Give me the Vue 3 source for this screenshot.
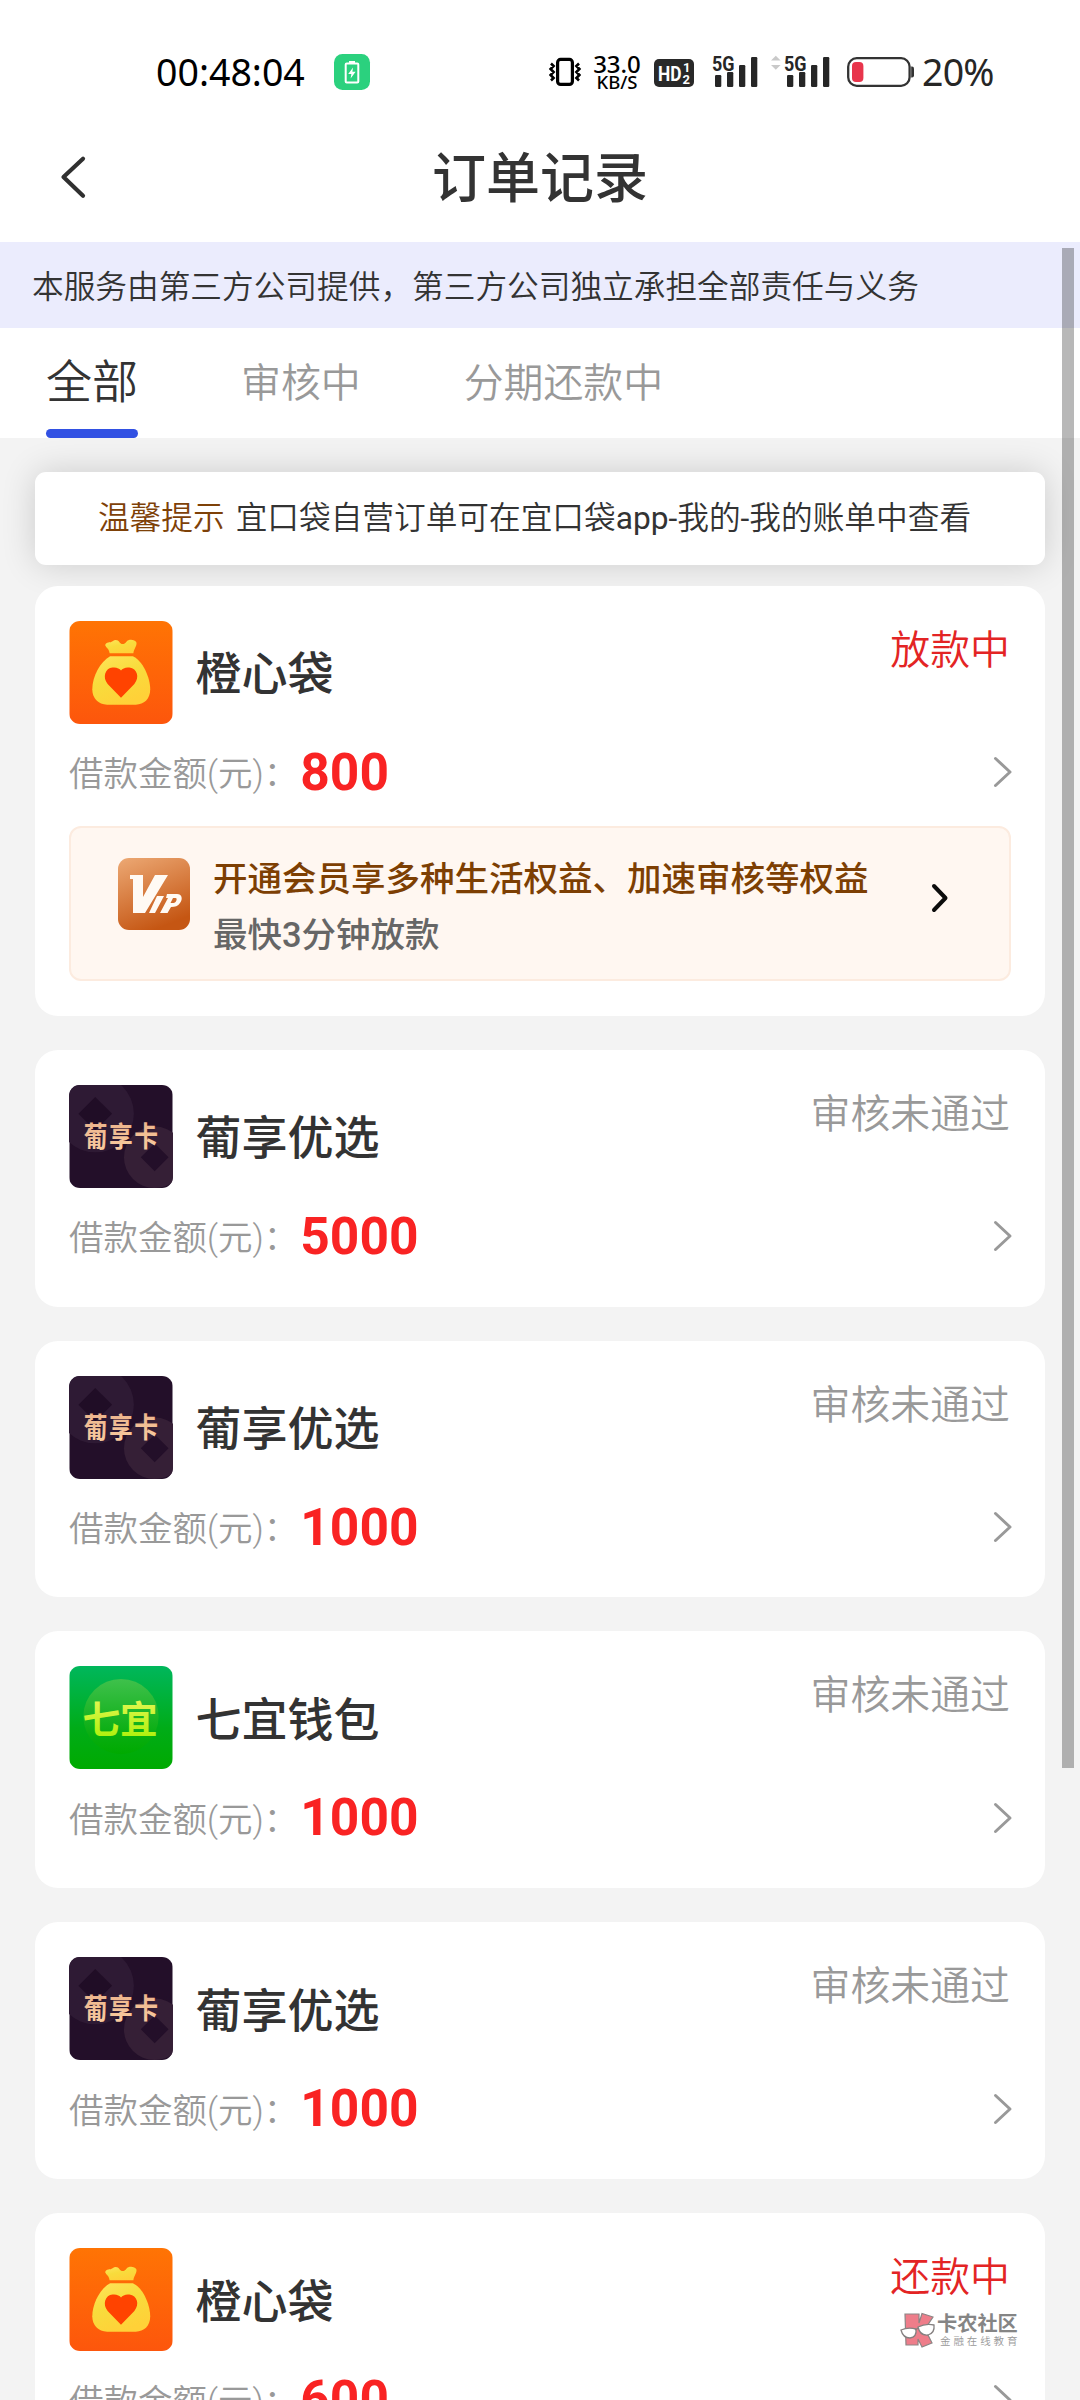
<script setup>
const tabs = ['全部', '审核中', '分期还款中']
const signalBars = [[3, 20, 12], [15, 17, 15], [27, 10, 22], [39, 2, 30]]
const orders = [
  { name: '橙心袋', logo: 'orange', amount: 800, status: '放款中', active: true, vip: true },
  { name: '葡享优选', logo: 'grape', amount: 5000, status: '审核未通过' },
  { name: '葡享优选', logo: 'grape', amount: 1000, status: '审核未通过' },
  { name: '七宜钱包', logo: 'green', amount: 1000, status: '审核未通过' },
  { name: '葡享优选', logo: 'grape', amount: 1000, status: '审核未通过' },
  { name: '橙心袋', logo: 'orange', amount: 600, status: '还款中', active: true },
]
</script>

<template>
  <div class="page">
    <header class="statusbar">
      <span class="clock">00:48:04</span>
      <svg class="charge" width="36" height="36" viewBox="0 0 36 36">
        <rect width="36" height="36" rx="8.5" fill="#2bd17e" />
        <rect x="11.7" y="9.5" width="12.6" height="19" rx="1" fill="none" stroke="#fff" stroke-width="2" />
        <rect x="15" y="7" width="6" height="3" fill="#fff" />
        <path d="M19 13.5 14.2 20H17.4L16.6 24.6 21.6 17.8H18.4Z" fill="#fff" />
      </svg>
      <svg class="vibrate" width="32" height="30" viewBox="0 0 32 30" fill="none" stroke="#000">
        <rect x="8.6" y="2.4" width="14.8" height="25" rx="3" stroke-width="3.2" />
        <path d="M2 6.5 4.6 9 1.6 12 4.6 15 1.6 18 4.6 21 2 23.5M30 6.5 27.4 9 30.4 12 27.4 15 30.4 18 27.4 21 30 23.5" stroke-width="2.6" />
      </svg>
      <div class="speed"><span class="rate">33.0</span><span class="unit">KB/S</span></div>
      <svg class="hd" width="40" height="28" viewBox="0 0 40 28">
        <rect width="40" height="28" rx="5" fill="#292929" />
        <g fill="#fff" font-family="Roboto, sans-serif" font-weight="700">
          <text x="4" y="21.5" font-size="21" textLength="23.5" lengthAdjust="spacingAndGlyphs">HD</text>
          <text x="29" y="13" font-size="13">1</text>
          <text x="28.5" y="24.5" font-size="13">2</text>
        </g>
      </svg>
      <svg v-for="n in 2" :key="n" :class="'signal signal' + n" width="60" height="34" viewBox="-13 0 60 34">
        <path v-if="n === 2" d="M-13 5.5 -8.2 .8 -3.4 5.5ZM-13 10 -8.2 14.7 -3.4 10Z" fill="#c9c9c9" />
        <text x="0" y="15.5" font-family="Roboto, sans-serif" font-weight="700" font-size="21" textLength="22.5" lengthAdjust="spacingAndGlyphs" fill="#262626">5G</text>
        <rect v-for="b in signalBars" :key="b[0]" :x="b[0]" :y="b[1]" width="6.3" :height="b[2]" rx="1.2" fill="#262626" />
      </svg>
      <svg class="battery" width="68" height="30" viewBox="0 0 68 30">
        <rect x="1.2" y="1.2" width="61.4" height="27.6" rx="8.5" fill="none" stroke="#333" stroke-width="2.3" />
        <rect x="5" y="5" width="11.4" height="20" rx="4" fill="#e8354c" />
        <path d="M64.2 9.5H65Q67 9.5 67 11.5V18.5Q67 20.5 65 20.5H64.2Z" fill="#333" />
      </svg>
      <span class="percent">20%</span>
    </header>

    <nav class="titlebar">
      <svg class="back" width="28" height="46" viewBox="0 0 28 46">
        <path d="M24 4.8 4.5 23 24 41.8" fill="none" stroke="#303030" stroke-width="4.2" stroke-linecap="round" stroke-linejoin="round" />
      </svg>
      <h1>订单记录</h1>
    </nav>

    <p class="notice">本服务由第三方公司提供，第三方公司独立承担全部责任与义务</p>

    <div class="tabs">
      <span v-for="(t, i) in tabs" :key="t" class="tab" :class="{ on: i === 0 }">{{ t }}</span>
    </div>

    <main class="list">
      <div class="tip"><span class="tip-label">温馨提示</span><span>宜口袋自营订单可在宜口袋<span class="latin">app-</span>我的<span class="latin">-</span>我的账单中查看</span></div>

      <section v-for="(o, i) in orders" :key="i" class="card">
        <div class="head">
          <svg v-if="o.logo === 'orange'" class="logo" viewBox="0 0 104 104">
            <defs>
              <linearGradient id="orangeBg" x1="0" y1="0" x2="0" y2="1"><stop stop-color="#ff7404" /><stop offset="1" stop-color="#fd560c" /></linearGradient>
              <linearGradient id="bag" x1="0" y1="0" x2=".5" y2="1"><stop stop-color="#ffe45c" /><stop offset=".5" stop-color="#f8dc3c" /><stop offset="1" stop-color="#ffd138" /></linearGradient>
            </defs>
            <rect width="104" height="104" fill="url(#orangeBg)" />
            <path d="M40.500 32.500C40 28 37 27 36 24.500C37 20.500 41 22.500 43.500 20.500C46 18.500 49 19 50.500 21.500C52 24 55.500 24 57.500 21C59.500 18 66 18.500 67.500 21.500C68.500 25 65 28 64.500 32.500Z" fill="url(#bag)" />
            <path d="M41 35.500H64C74 40 81.500 57 81.500 69C81.500 79 75 84.500 67 84.500H38C29 84.500 23 78 23 69C23 56 31 41 41 35.500Z" fill="url(#bag)" />
            <path d="M52 77.500 38.500 63.500C33 57 36 47.500 43.500 47C47.500 46.500 50.500 48 52 50C53.500 48 56.500 46.500 60.500 47C68.500 48 71 57 65.500 63.500Z" fill="#ff4300" />
          </svg>
          <svg v-else-if="o.logo === 'grape'" class="logo" viewBox="0 0 104 104">
            <defs><linearGradient id="gold" x1="0" y1="0" x2="0" y2="1"><stop stop-color="#e9ae88" /><stop offset="1" stop-color="#fbd0a2" /></linearGradient></defs>
            <rect width="104" height="104" fill="#230f29" />
            <circle cx="26" cy="29" r="39" fill="#2e1a34" />
            <path d="M26 12 43 29 26 46 9 29Z" fill="#200d26" />
            <circle cx="86" cy="73" r="31" fill="#351f36" />
            <path d="M86 59 100 73 86 87 72 73Z" fill="#230f29" />
            <text transform="translate(14.500 62.500) scale(1 1.200)" font-family="'Noto Sans CJK SC', sans-serif" font-weight="700" font-size="24" textLength="75" fill="url(#gold)">葡享卡</text>
          </svg>
          <svg v-else class="logo" viewBox="0 0 104 104">
            <defs>
              <linearGradient id="greenBg" x1="0" y1="0" x2="0" y2="1"><stop stop-color="#00b75c" /><stop offset=".6" stop-color="#00ac18" /><stop offset="1" stop-color="#00aa00" /></linearGradient>
              <linearGradient id="disc" x1="0" y1="0" x2="0" y2="1"><stop stop-color="#3fc14c" /><stop offset=".75" stop-color="#08ad10" /><stop offset="1" stop-color="#00aa00" /></linearGradient>
              <linearGradient id="lime" x1="0" y1="0" x2="0" y2="1"><stop stop-color="#f1f765" /><stop offset="1" stop-color="#a6f000" /></linearGradient>
            </defs>
            <rect width="104" height="104" fill="url(#greenBg)" />
            <circle cx="52" cy="51" r="38" fill="url(#disc)" />
            <text x="13" y="67.500" font-family="'Noto Sans CJK SC', sans-serif" font-weight="700" font-size="38" fill="url(#lime)">七宜</text>
          </svg>
          <span class="name">{{ o.name }}</span>
          <span class="state" :class="{ active: o.active }">{{ o.status }}</span>
        </div>
        <div class="row">
          <span class="label">借款金额(元)：</span>
          <b class="amount">{{ o.amount }}</b>
          <svg class="arrow" width="19" height="32" viewBox="0 0 19 32">
            <path d="M2.500 2.500 17 16 2.500 29.500" fill="none" stroke="#999" stroke-width="3" stroke-linecap="round" stroke-linejoin="round" />
          </svg>
        </div>
        <div v-if="o.vip" class="vip">
          <svg class="vip-icon" width="72" height="72" viewBox="0 0 72 72">
            <defs><linearGradient id="vipBg" x1="0.100" y1="0" x2=".5" y2="1"><stop stop-color="#eba671" /><stop offset="1" stop-color="#c55613" /></linearGradient></defs>
            <rect width="72" height="72" rx="11" fill="url(#vipBg)" />
            <path d="M12 17H25V39L37 17H50L27 55H15V21H12Z" fill="#fffaf4" />
            <path d="M39 38H46L37 55H31ZM49 36H59C64 36 65 41 62 45C60 48 57 49 53 49L49.500 55H42L50 40H48ZM55 40 52.500 45H55.500C58 45 60 40 57.500 40Z" fill="#fffaf4" fill-rule="evenodd" />
          </svg>
          <div class="vip-text">
            <span class="vip-main">开通会员享多种生活权益、加速审核等权益</span>
            <span class="vip-sub">最快3分钟放款</span>
          </div>
          <svg class="vip-arrow" width="20" height="32" viewBox="0 0 20 32">
            <path d="M4 4 15.500 16 4 28" fill="none" stroke="#0c0c0c" stroke-width="4" stroke-linecap="round" stroke-linejoin="round" />
          </svg>
        </div>
      </section>
    </main>

    <div class="scrollbar"></div>

    <div class="watermark">
      <svg width="35" height="36" viewBox="0 0 35 36">
        <path d="M5 2H19V11L22 1.500 33 5 25 17 32 31 22 35 18 27V33H6Z" fill="#ee7d8a" stroke="#8d8585" stroke-width="1.200" />
        <path d="M1 18Q8 15 16 17Q17 25 10 26Q3 26 1 18ZM18 15Q26 11 34 13Q35 21 28 23Q20 24 18 15Z" fill="#fff" stroke="#858080" stroke-width="1.300" />
        <path d="M15 18 18.500 16" stroke="#858080" stroke-width="1.300" />
      </svg>
      <div class="wm-text"><span class="wm-name">卡农社区</span><span class="wm-sub">金融在线教育</span></div>
    </div>
  </div>
</template>

<style>
body { margin: 0; background: #f3f3f3; }
</style>

<style scoped>
.page {
  position: relative;
  width: 1080px;
  height: 2400px;
  overflow: hidden;
  background: #f3f3f3;
  color: #333;
  font-family: Roboto, "Noto Sans CJK SC", sans-serif;
  font-weight: 350;
}
svg { display: block; flex: none; overflow: visible; }
.logo { overflow: hidden; }
.statusbar {
  display: flex;
  height: 114px;
  box-sizing: border-box;
  padding: 54px 0 0 156px;
  background: #fff;
  align-items: flex-start;
  white-space: nowrap;
  font-weight: 400;
}
.clock, .percent {
  font-family: "Noto Sans", sans-serif;
  font-size: 37.500px;
  line-height: 36px;
  color: #000;
}
.clock { width: 178px; }
.charge { margin-right: 179px; }
.vibrate { margin-top: 3px; }
.speed {
  width: 52px;
  margin-left: 10px;
  display: flex;
  flex-direction: column;
  align-items: center;
  font-family: "Noto Sans", sans-serif;
  font-weight: 500;
  color: #000;
}
.rate { font-size: 24px; line-height: 17px; margin-top: 1px; }
.unit { font-size: 18.500px; line-height: 17px; margin-top: 1px; }
.hd { margin: 5px 0 0 11px; }
.signal { margin-top: 1px; }
.signal1 { margin-left: 5px; }
.signal2 { margin-left: 12px; }
.battery { margin: 3px 0 0 16px; }
.percent { margin-left: 7px; color: #262626; letter-spacing: -.8px; }

.titlebar {
  display: flex;
  align-items: center;
  height: 128px;
  background: #fff;
}
.back { margin: -3px 0 0 59px; }
h1 {
  flex: 1;
  margin: 4px 87px 0 0;
  text-align: center;
  font-size: 54px;
  line-height: 80px;
  font-weight: 500;
  color: #333;
}
.notice {
  margin: 0;
  height: 86px;
  padding: 3px 0 0 32px;
  box-sizing: border-box;
  line-height: 86px;
  font-size: 31.68px;
  background: #ebecfd;
}
.tabs {
  display: flex;
  height: 110px;
  padding-left: 46px;
  background: #fff;
}
.tab {
  height: 110px;
  box-sizing: border-box;
  padding-top: 1px;
  line-height: 110px;
  font-size: 39.900px;
  color: #999;
  margin-right: 103px;
}
.tab.on {
  display: flex;
  flex-direction: column;
  padding: 0;
  font-size: 46px;
  line-height: 108px;
  color: #333;
}
.tab.on::after {
  content: "";
  height: 9px;
  margin-top: -7px;
  border-radius: 4.500px;
  background: #3251e3;
}
.list {
  display: flex;
  flex-direction: column;
  padding: 34px 35px 0;
}
.tip {
  display: flex;
  justify-content: center;
  gap: 11px;
  height: 93px;
  margin-bottom: 20.800px;
  padding-right: 11px;
  border-radius: 11px;
  background: #fff;
  box-shadow: 0 0 34px rgba(0, 0, 0, .16);
  font-size: 31.68px;
  line-height: 93px;
}
.tip-label { color: #7e4108; }
.latin { font-weight: 400; }
.card {
  position: relative;
  margin-bottom: 34.100px;
  padding: 35px 34px 21.700px;
  border-radius: 23px;
  background: #fff;
}
.card:has(.vip) { padding-bottom: 35px; }
.head { display: flex; height: 103px; }
.logo { width: 104px; height: 103px; border-radius: 11px; }
.name {
  margin: 2.500px 0 0 22.500px;
  font-size: 46px;
  line-height: 103px;
  font-weight: 500;
}
.state {
  margin-left: auto;
  padding-right: 1px;
  font-size: 39.900px;
  line-height: 59px;
  color: #999;
}
.state.active { color: #e32424; }
.row { display: flex; align-items: center; height: 97px; }
.label { margin-top: -2px; font-size: 34.500px; color: #999; }
.amount { margin-left: 2px; font-size: 51.500px; font-weight: 700; color: #f92323; }
.arrow { margin-left: auto; margin-right: -1px; }
.vip {
  display: flex;
  box-sizing: border-box;
  height: 155px;
  margin-top: 5px;
  border: 2px solid #fcebdf;
  border-radius: 12px;
  background: #fff7f1;
}
.vip-icon { margin: 30px 0 0 47px; }
.vip-text {
  display: flex;
  flex-direction: column;
  margin: 23px 0 0 23px;
  font-size: 34.500px;
  line-height: 56px;
  font-weight: 500;
}
.vip-main { color: #7d3f03; }
.vip-sub { color: #666; }
.vip-arrow { margin: 54px 59px 0 auto; }
.scrollbar {
  position: absolute;
  left: 1062px;
  top: 248px;
  width: 12px;
  height: 1520px;
  background: rgba(0, 0, 0, .28);
}
.watermark {
  position: absolute;
  left: 900px;
  top: 2312px;
  display: flex;
  gap: 2px;
}
.wm-text { display: flex; flex-direction: column; white-space: nowrap; }
.wm-name { font-size: 20.200px; line-height: 24px; font-weight: 700; color: #858585; }
.wm-sub { margin-left: 3px; font-size: 10.500px; line-height: 12px; letter-spacing: 2.900px; color: #999; }
</style>
